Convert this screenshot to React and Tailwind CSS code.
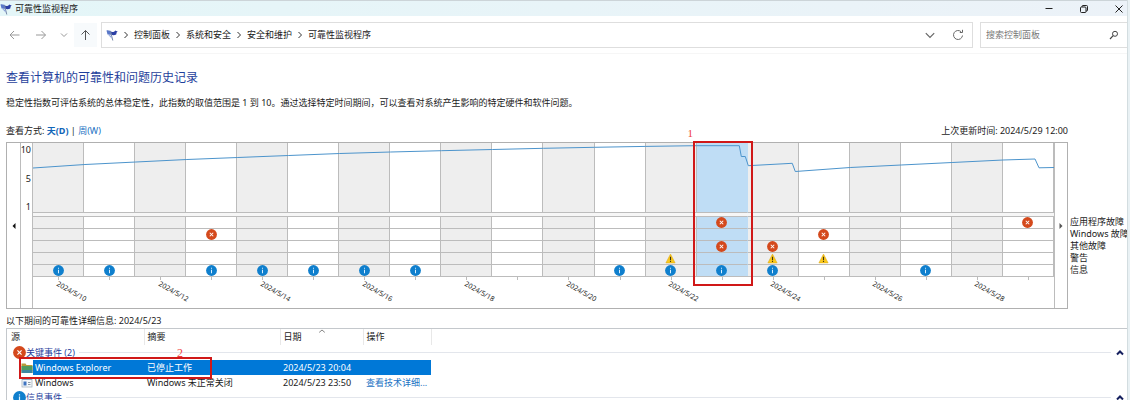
import React, { useState } from 'react';

const DAY_COUNT = 20;
const FIRST_DAY = 10;

// index in each list = day column, rows go from application failures to information
const EVENTS = [
  { label: '应用程序故障', type: 'error', days: [13, 19] },
  { label: 'Windows 故障', type: 'error', days: [3, 15] },
  { label: '其他故障', type: 'error', days: [13, 14] },
  { label: '警告', type: 'warning', days: [12, 14, 15] },
  { label: '信息', type: 'info', days: [0, 1, 3, 4, 5, 6, 7, 11, 12, 13, 14, 17] },
];

const STABILITY_POINTS =
  '0,25 52,21.5 103,19 154,16.5 205,14.5 256,12.5 307,10.5 358,9 409,7.7 460,6.5 511,5.3 562,4.3 613,3.4 664,2.7 707,2.7 709,13.5 713,13.5 716,22.7 760,20.3 763,28.5 818,24.5 869,22 920,19.5 971,17 1003,16 1007,24.8 1022,24.5';

const CRUMBS = ['控制面板', '系统和安全', '安全和维护', '可靠性监视程序'];

function FlagIcon() {
  return (
    <svg className="w-3 h-3 shrink-0" viewBox="0 0 12 12">
      <path d="M0.5 1.5c1.6-.9 2.6.6 4.1.2l.9 3.9c-1.5.6-2.6-.6-4 0z" fill="#5a78c8" />
      <path d="M4.6 2.6c2 .8 3.6.3 4.7-1.2.6.7 1.4.8 2.4.7-.9.9-1.4 2-1.5 3.4-1.5.8-3.2.9-4.9.3z" fill="#2b3fa5" />
      <path d="M4.5 2.2l2.3 9.3" stroke="#7587a8" fill="none" />
      <path d="M1.8 5.6l3.2 1.2 1 3z" fill="#8ba0d8" />
    </svg>
  );
}

function Chevron({ d, className }) {
  return (
    <svg className={className} viewBox="0 0 10 10" fill="none" stroke="currentColor">
      <path d={d} />
    </svg>
  );
}

function EventIcon({ type, className }) {
  if (type === 'warning') {
    return (
      <svg className={className} viewBox="0 0 12 12">
        <path d="M6 1.2L11 10.8H1z" fill="#fbc91c" stroke="#e0a911" strokeWidth="0.6" strokeLinejoin="round" />
        <path d="M6 4.2v3.6M6 8.7v1.2" stroke="#3d3413" strokeWidth="1.2" />
      </svg>
    );
  }
  if (type === 'error') {
    return (
      <svg className={className} viewBox="0 0 12 12">
        <circle cx="6" cy="6" r="5.9" fill="#d4491c" />
        <path d="M4.1 4.1l3.8 3.8M7.9 4.1l-3.8 3.8" stroke="#fff" strokeWidth="1.1" />
      </svg>
    );
  }
  return (
    <svg className={className} viewBox="0 0 12 12">
      <circle cx="6" cy="6" r="5.9" fill="#0f7fcd" />
      <path d="M6 5.1v3.9M6 2.9v1.2" stroke="#d9efff" strokeWidth="1.1" />
    </svg>
  );
}

function TitleBar() {
  return (
    <div className="h-4 flex items-center justify-between border-t border-[#ccd4d8] bg-linear-to-r from-[#e4f6f8] to-[#ecf2f8]">
      <div className="flex items-center gap-[3px]">
        <FlagIcon />
        <span>可靠性监视程序</span>
      </div>
      <div className="flex items-center gap-[23px] pr-[2px]">
        <button aria-label="最小化">
          <svg className="w-3 h-3" viewBox="0 0 12 12" fill="none" stroke="#222">
            <path d="M2.5 5.5h7" />
          </svg>
        </button>
        <button aria-label="还原">
          <svg className="w-3 h-3" viewBox="0 0 12 12" fill="none" stroke="#222">
            <rect x="2.5" y="4" width="5.5" height="5.5" rx="1" />
            <path d="M4 4V3.5a1 1 0 0 1 1-1h3.5a1 1 0 0 1 1 1V7a1 1 0 0 1-1 1H8" />
          </svg>
        </button>
        <button aria-label="关闭">
          <svg className="w-3 h-3" viewBox="0 0 12 12" fill="none" stroke="#222">
            <path d="M2.5 2.5l7 7M9.5 2.5l-7 7" />
          </svg>
        </button>
      </div>
    </div>
  );
}

function NavBar() {
  return (
    <div className="flex items-center h-[38px] pl-2 border-b border-[#f6f6f6]">
      <div className="flex items-center w-[93px] text-[#999]">
        <button aria-label="后退" className="w-[26px]">
          <svg className="w-3 h-3" viewBox="0 0 12 12" fill="none" stroke="currentColor">
            <path d="M11.5 6H2M6 2L2 6l4 4" />
          </svg>
        </button>
        <button aria-label="前进" className="w-[25px]">
          <svg className="w-3 h-3" viewBox="0 0 12 12" fill="none" stroke="currentColor">
            <path d="M2 6h9.5M7.5 2l4 4-4 4" />
          </svg>
        </button>
        <button aria-label="最近的位置" className="w-[15px]">
          <Chevron className="w-2.5 h-2.5" d="M2 3.5l3 3 3-3" />
        </button>
        <button aria-label="向上" className="flex items-center justify-center w-[23px] h-6 bg-[#f7fafc] text-[#555]">
          <svg className="w-3 h-3" viewBox="0 0 12 12" fill="none" stroke="currentColor">
            <path d="M5.5 11V1.5M1.500 5.500l4-4 4 4" />
          </svg>
        </button>
      </div>
      <div className="flex-1 flex items-center h-[26px] border border-[#dedede] pl-1 pr-2">
        <FlagIcon />
        {CRUMBS.map((crumb) => (
          <React.Fragment key={crumb}>
            <Chevron className="w-2.5 h-2.5 mx-[3px] text-[#333]" d="M3.5 2l3 3-3 3" />
            <a href="#">{crumb}</a>
          </React.Fragment>
        ))}
        <div className="ml-auto flex items-center gap-4 text-[#666]">
          <button aria-label="展开地址">
            <Chevron className="w-3 h-3" d="M1.5 3.5L5 7l3.5-3.5" />
          </button>
          <button aria-label="刷新">
            <svg className="w-3 h-3" viewBox="0 0 12 12" fill="none" stroke="currentColor">
              <path d="M10.5 6.5a4.5 4.5 0 1 1-1.4-3.8M10.5 0.8v2.7H7.8" />
            </svg>
          </button>
        </div>
      </div>
      <label className="flex items-center w-[147px] h-[26px] ml-[7px] border border-r-0 border-[#dedede] pl-[5px] pr-2">
        <input
          type="text"
          aria-label="搜索控制面板"
          placeholder="搜索控制面板"
          className="flex-1 min-w-0 outline-none placeholder:text-[#777]"
        />
        <svg className="w-[10px] h-[10px]" viewBox="0 0 10 10" fill="none" stroke="#444">
          <circle cx="6" cy="3.8" r="2.5" />
          <path d="M4.2 5.7L1 9" strokeWidth="1.2" />
        </svg>
      </label>
    </div>
  );
}

function DayColumn({ index, selected, onSelect }) {
  const date = `2024/5/${FIRST_DAY + index}`;
  const shade = selected ? 'bg-[#bfddf5]' : index % 2 === 0 ? 'bg-[#eeeeee]' : 'bg-white';
  const border = selected ? 'border-r-[#bfddf5]' : 'border-r-[#bcbcbc]';
  return (
    <div className="relative flex-1 min-w-0">
      <button aria-label={date} onClick={() => onSelect(index)} className="block w-full">
        <div className={`h-[70px] border-r border-b border-b-[#bcbcbc] ${shade} ${border}`} />
        <div className="h-[3px] bg-[#f6f6f6]" />
        {EVENTS.map((row) => (
          <div
            key={row.label}
            className={`h-3 border-t border-r border-t-[#bcbcbc] flex items-center justify-center ${shade} ${border}`}
          >
            {row.days.includes(index) && <EventIcon type={row.type} className="w-[11px] h-[11px] shrink-0" />}
          </div>
        ))}
      </button>
      <div className="h-8 border-t border-[#bcbcbc]">
        <div className="w-px h-[3px] mx-auto bg-[#bcbcbc]" />
        {index % 2 === 0 && (
          <div className="w-1/2 ml-auto">
            <span className="block w-9 h-2 text-[7px] leading-[8px] whitespace-nowrap origin-top-left rotate-30">
              {date}
            </span>
          </div>
        )}
      </div>
      {index === 13 && (
        <>
          <div className="absolute z-10 -left-1 -right-[5px] -top-[2px] h-[145px] border-2 border-[#d01818] pointer-events-none" />
          <span className="absolute z-10 -left-[9px] -top-4 text-[11px] leading-3 text-[#f04040] font-['Liberation_Serif',serif]">
            1
          </span>
        </>
      )}
    </div>
  );
}

function StabilityChart() {
  const [selectedDay, setSelectedDay] = useState(13);

  return (
    <div className="flex">
      <div className="flex-1 min-w-0 flex h-[167px] border border-[#b0b0b0]">
        <button aria-label="上一页" className="w-[13px] flex items-center justify-center">
          <svg className="w-2 h-2" viewBox="0 0 8 8">
            <path d="M5.5 1v6l-3-3z" fill="#111" />
          </svg>
        </button>
        <div className="w-[13px] border-x border-[#bcbcbc] flex flex-col items-end justify-between h-full pb-[95px] pt-[1px] pr-[1px]">
          <span>10</span>
          <span>5</span>
          <span>1</span>
        </div>
        <div className="relative flex-1 min-w-0 flex">
          {Array.from({ length: DAY_COUNT }, (_, i) => (
            <DayColumn key={i} index={i} selected={i === selectedDay} onSelect={setSelectedDay} />
          ))}
          <svg
            className="absolute left-0 top-0 w-full h-[70px] pointer-events-none"
            viewBox="0 0 1022 70"
            preserveAspectRatio="none"
          >
            <polyline
              points={STABILITY_POINTS}
              fill="none"
              stroke="#4c94cc"
              strokeWidth="1"
              vectorEffect="non-scaling-stroke"
            />
          </svg>
        </div>
        <button aria-label="下一页" className="w-[13px] border-l border-[#bcbcbc] flex items-center justify-center">
          <svg className="w-2 h-2" viewBox="0 0 8 8">
            <path d="M2.5 1v6l3-3z" fill="#555" />
          </svg>
        </button>
      </div>
      <div className="w-[59px] pl-[2px] pt-[74px] overflow-hidden whitespace-nowrap">
        {EVENTS.map((row) => (
          <div key={row.label} className="h-3">
            {row.label}
          </div>
        ))}
      </div>
    </div>
  );
}

function GroupRow({ type, title }) {
  return (
    <tr className="h-[15px]">
      <td colSpan={5} className="p-0">
        <div className="flex items-center pl-[6px] pr-[2px]">
          <EventIcon type={type} className="w-[13px] h-[13px] -my-px" />
          <span className="text-[#1f3f9c] mr-1">{title}</span>
          <div className="flex-1 h-px bg-[#e3e6ec]" />
          <button aria-label="折叠" className="ml-1">
            <Chevron className="w-2.5 h-2.5 stroke-2 text-[#16205e]" d="M2 6.5l3-3 3 3" />
          </button>
        </div>
      </td>
    </tr>
  );
}

function DetailsTable() {
  return (
    <div className="relative border-t border-l border-[#c4c8cc]">
      <table className="w-full table-fixed border-collapse text-left">
        <thead>
          <tr className="h-4">
            <th className="w-[137px] p-0 pl-1 font-normal border-r border-[#e8e8e8]">源</th>
            <th className="w-[136px] p-0 pl-[3px] font-normal border-r border-[#e8e8e8]">摘要</th>
            <th className="relative w-[83px] p-0 pl-[3px] font-normal border-r border-[#e8e8e8]">
              日期
              <Chevron className="absolute left-[37px] -top-px w-2 h-2 text-[#666]" d="M1.5 5.5L5 2.5l3.5 3" />
            </th>
            <th className="w-[68px] p-0 pl-[3px] font-normal border-r border-[#e8e8e8]">操作</th>
            <th className="p-0" aria-label="空" />
          </tr>
        </thead>
        <tbody>
          <GroupRow type="error" title="关键事件 (2)" />
          <tr className="h-[15px] text-white">
            <td className="p-0 pl-[14px]">
              <div className="flex items-center">
                <svg className="w-3 h-3 shrink-0" viewBox="0 0 12 12">
                  <path d="M0.5 1.5h4l1 1.5h6v8h-11z" fill="#b79b3c" />
                  <path d="M0.5 4h11v4.5h-11z" fill="#4f9a62" />
                  <path d="M0.5 8h11v3h-11z" fill="#3c86a0" />
                </svg>
                <span className="flex-1 leading-[15px] bg-[#0078d7] pl-[2px]">Windows Explorer</span>
              </div>
            </td>
            <td className="p-0 pl-[3px] bg-[#0078d7]">已停止工作</td>
            <td className="p-0 pl-[3px] bg-[#0078d7]">2024/5/23 20:04</td>
            <td className="p-0 bg-[#0078d7]" />
            <td className="p-0" />
          </tr>
          <tr className="h-[15px]">
            <td className="p-0 pl-[14px]">
              <div className="flex items-center">
                <svg className="w-3 h-3 shrink-0" viewBox="0 0 12 12">
                  <rect x="1" y="2" width="10" height="8" fill="#f4f7fa" stroke="#a9b4bd" strokeWidth="0.8" />
                  <path d="M1 2.5h10" stroke="#8fa5b8" />
                  <path d="M2.5 4.5h3v4h-3z" fill="#3f74c0" />
                  <path d="M7 5.5h2.5M7 7.5h2.5" stroke="#8c9aa5" />
                </svg>
                <span className="pl-[2px]">Windows</span>
              </div>
            </td>
            <td className="p-0 pl-[3px]">Windows 未正常关闭</td>
            <td className="p-0 pl-[3px]">2024/5/23 23:50</td>
            <td className="p-0 pl-[3px] whitespace-nowrap">
              <a href="#" className="text-[#2272c3]">
                查看技术详细...
              </a>
            </td>
            <td className="p-0" />
          </tr>
          <GroupRow type="info" title="信息事件" />
        </tbody>
      </table>
      <div className="absolute left-3 top-[28px] w-[193px] h-[22px] border-2 border-[#d01818] pointer-events-none" />
      <span className="absolute left-[170px] top-[18px] text-[12px] leading-3 text-[#f04040] font-['Liberation_Serif',serif]">
        2
      </span>
    </div>
  );
}

export default function App() {
  return (
    <div className="flex h-screen overflow-hidden bg-[#e9f1f4] text-[#1a1a1a] text-[9px] leading-3 font-['Noto_Sans','Noto_Sans_CJK_SC',sans-serif]">
      <div className="flex-1 min-w-0 mr-[2px] border-r border-[#d3dde0] bg-white">
        <TitleBar />
        <NavBar />
        <main className="pl-[6px]">
          <h1 className="mt-4 text-[12px] leading-4 text-[#1f3f9c]">查看计算机的可靠性和问题历史记录</h1>
          <p className="mt-[11px]">
            稳定性指数可评估系统的总体稳定性，此指数的取值范围是 1 到 10。通过选择特定时间期间，可以查看对系统产生影响的特定硬件和软件问题。
          </p>
          <div className="flex justify-between mt-4 mb-[5px] pr-[59px]">
            <div>
              查看方式:{' '}
              <a href="#" className="font-bold text-[#1266b8]">
                天(D)
              </a>{' '}
              |{' '}
              <a href="#" className="text-[#2272c3]">
                周(W)
              </a>
            </div>
            <div>上次更新时间: 2024/5/29 12:00</div>
          </div>
          <StabilityChart />
          <h2 className="mt-[6px] mb-px">以下期间的可靠性详细信息: 2024/5/23</h2>
          <DetailsTable />
        </main>
      </div>
    </div>
  );
}
